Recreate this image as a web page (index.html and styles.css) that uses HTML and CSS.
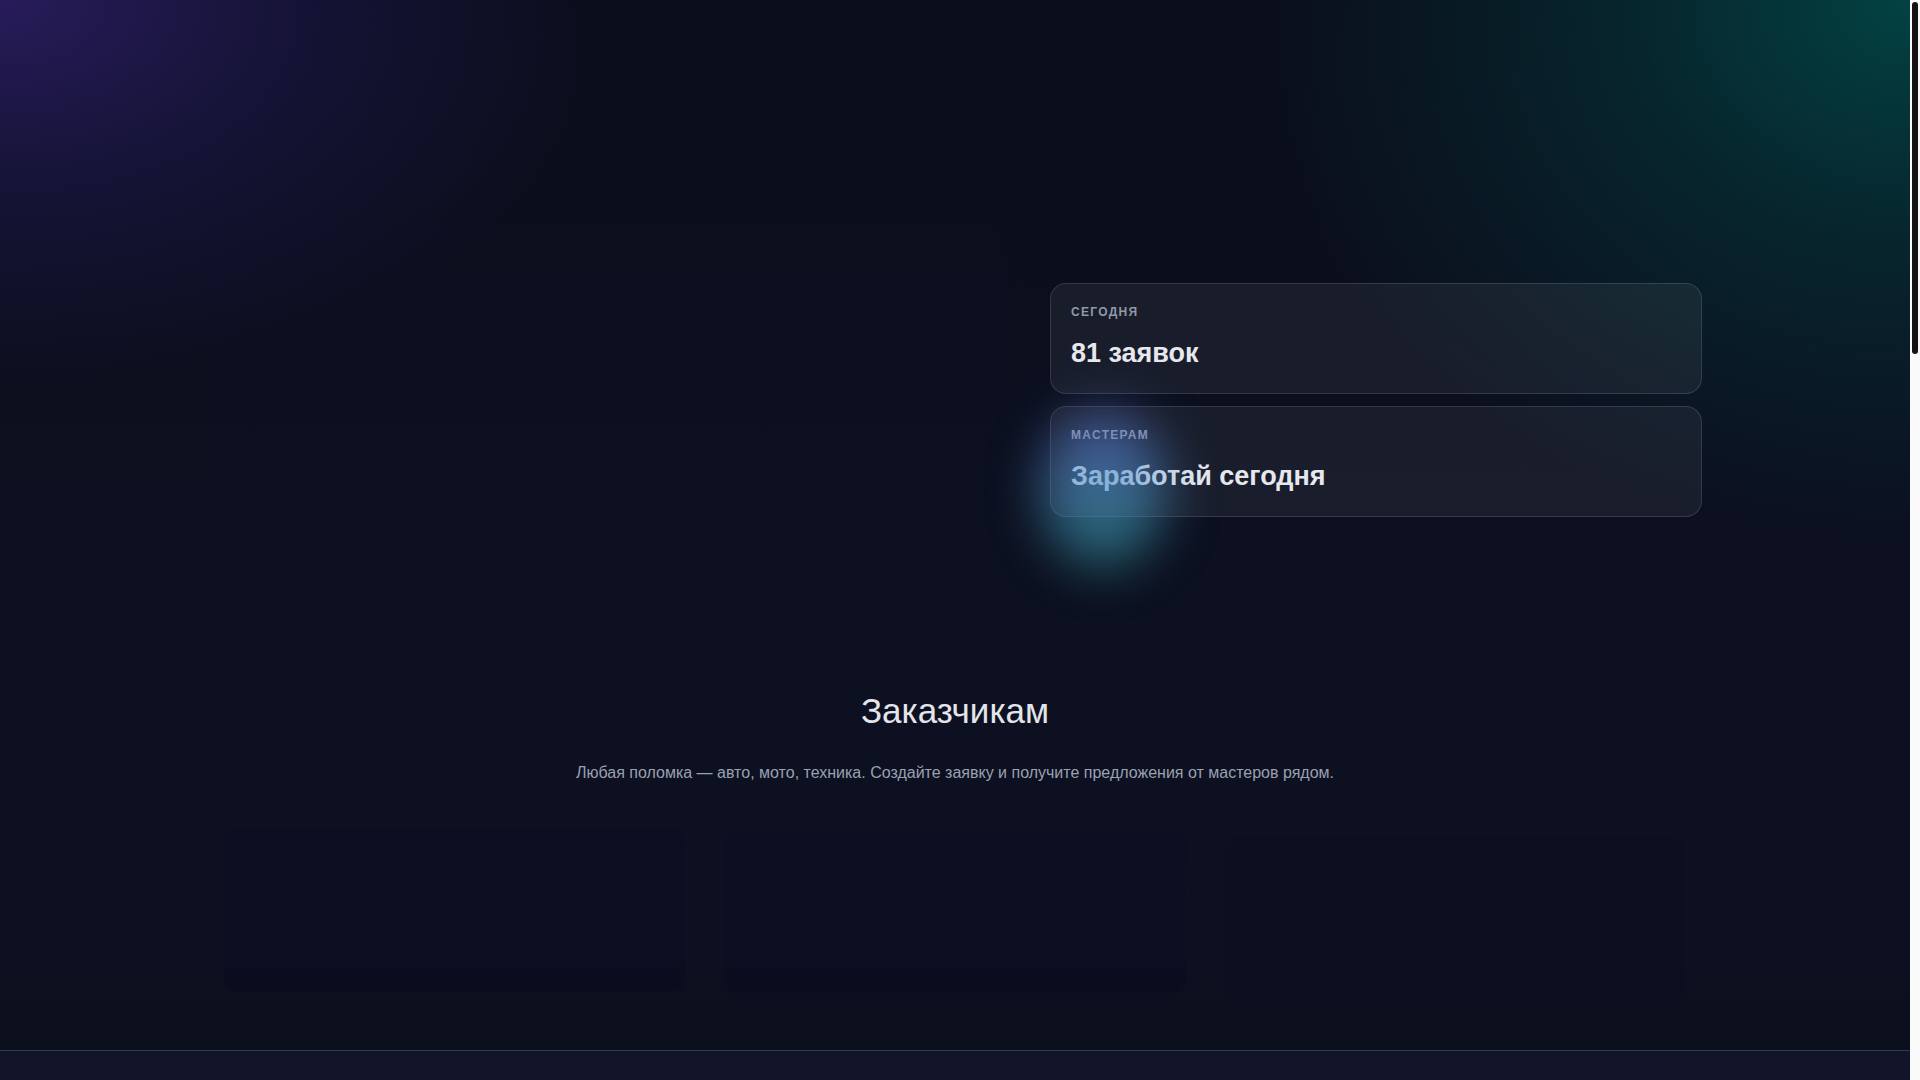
FILE: index.html
```html
<!DOCTYPE html>
<html lang="ru">
<head>
<meta charset="utf-8">
<title>Мастера рядом</title>
<link rel="stylesheet" href="styles.css">
</head>
<body>
<main class="page">
  <section class="hero">
    <div class="hero-inner">
      <div class="hero-copy"></div>
      <div class="hero-cards">
        <div class="stat-card">
          <div class="stat-label">Сегодня</div>
          <div class="stat-value">81 заявок</div>
        </div>
        <div class="stat-card">
          <div class="stat-label">Мастерам</div>
          <div class="stat-value">Заработай сегодня</div>
          <span class="glow"></span>
        </div>
      </div>
    </div>
  </section>

  <section class="customers">
    <h2 class="section-title">Заказчикам</h2>
    <p class="section-sub">Любая поломка — авто, мото, техника. Создайте заявку и получите предложения от мастеров рядом.</p>
    <div class="feature-grid">
      <div class="feature feature--a"></div>
      <div class="feature feature--b"></div>
      <div class="feature feature--c"></div>
    </div>
  </section>

  <section class="next-section"></section>
</main>
<div class="scrollbar" aria-hidden="true"><span class="scrollbar-thumb"></span></div>
</body>
</html>
```

FILE: styles.css
```css
html, body {
  margin: 0;
  padding: 0;
}

body {
  background: #0c1020;
  font-family: "Liberation Sans", Arial, sans-serif;
  color: #e6e8ee;
}

.page {
  margin-right: 10px;
  background:
    radial-gradient(ellipse 620px 380px at 0 0, rgba(72, 44, 160, 0.48) 0%, rgba(60, 40, 150, 0.24) 45%, rgba(60, 40, 150, 0) 100%),
    radial-gradient(ellipse 660px 540px at 100% 0, rgba(0, 86, 82, 0.72) 0%, rgba(0, 76, 74, 0.36) 45%, rgba(0, 70, 70, 0) 100%),
    linear-gradient(180deg, #0a0d1a 0, #0c1020 620px, #0d1020 950px, #0b0e1b 1049px);
  background-repeat: no-repeat;
  background-size: 100% 1050px;
}

.hero {
  padding-top: 223px;
}

.hero-inner {
  max-width: 1494px;
  margin: 0 auto;
  display: grid;
  grid-template-columns: minmax(0, 1fr) 652px;
  column-gap: 48px;
  align-items: center;
}

.hero-copy {
  height: 354px;
  border-radius: 20px;
  background: rgba(20, 26, 60, 0.05);
}

.hero-cards {
  display: flex;
  flex-direction: column;
  gap: 12px;
}

.stat-card {
  position: relative;
  padding: 20px 20px 23px;
  border: 1px solid rgba(255, 255, 255, 0.12);
  border-radius: 16px;
  background: rgba(255, 255, 255, 0.06);
}

.stat-label {
  font-size: 12px;
  line-height: 16px;
  font-weight: 700;
  letter-spacing: 1.3px;
  text-transform: uppercase;
  color: #9198a8;
}

.stat-value {
  margin-top: 16px;
  font-size: 27px;
  line-height: 34px;
  font-weight: 700;
  color: #e6e8ee;
}

.glow {
  position: absolute;
  left: -10px;
  top: 6px;
  width: 124px;
  height: 152px;
  border-radius: 50%;
  background: linear-gradient(180deg, rgba(96, 118, 220, 0.62) 0%, rgba(80, 145, 205, 0.62) 45%, rgba(50, 165, 165, 0.62) 100%);
  filter: blur(26px);
  pointer-events: none;
}

.customers {
  padding: 113px 0 58px;
  text-align: center;
}

.section-title {
  margin: 0;
  font-size: 35px;
  line-height: 42px;
  font-weight: 400;
  color: #e3e5eb;
}

.section-sub {
  margin: 29px 0 0;
  font-size: 16px;
  line-height: 24px;
  color: #9aa1b1;
}

.feature-grid {
  max-width: 1464px;
  margin: 42px auto 0;
  display: grid;
  grid-template-columns: repeat(3, 1fr);
  gap: 36px;
}

.feature {
  height: 163px;
  border-radius: 16px;
  border: 1px solid rgba(255, 255, 255, 0.012);
  background: rgba(6, 10, 40, 0.14);
}

.feature--b {
  transform: translateY(2px);
}

.feature--c {
  transform: translateY(8px);
  background: rgba(6, 10, 40, 0.1);
}

.next-section {
  min-height: 2225px;
  border-top: 1px solid rgba(110, 150, 160, 0.32);
  background: #12142a;
}

.scrollbar {
  position: fixed;
  top: 0;
  right: 0;
  width: 10px;
  height: 100vh;
  background: #fafafa;
}

.scrollbar-thumb {
  position: absolute;
  top: 2px;
  left: 2px;
  width: 6px;
  height: 352px;
  border-radius: 3px;
  background: #141414;
}
```
